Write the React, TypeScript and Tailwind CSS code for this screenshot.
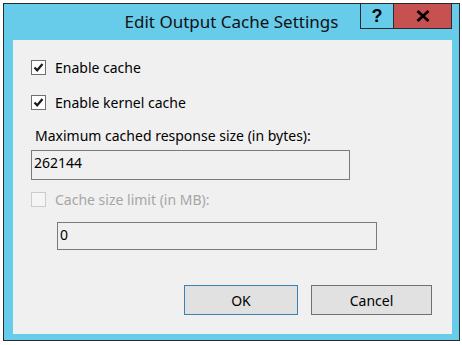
import React from 'react';

const font = { fontFamily: '"Noto Sans", "Liberation Sans", sans-serif' };

const CheckBox: React.FC<{ checked?: boolean; disabled?: boolean }> = ({ checked, disabled }) => (
  <div
    className={
      'w-[15px] h-[15px] border flex items-center justify-center shrink-0 ' +
      (disabled ? 'border-[#cccccc] bg-[#f5f5f5]' : 'border-[#6f6f6f] bg-white')
    }
  >
    {checked && (
      <svg width="11" height="11" viewBox="0 0 11 11">
        <path d="M1.5 5.5 L4.2 8.3 L9.5 2" fill="none" stroke="#1a1a1a" strokeWidth="2.2" />
      </svg>
    )}
  </div>
);

export default function App() {
  return (
    <div className="w-[462px] h-[345px] bg-white overflow-hidden" style={font}>
      <div className="ml-[3px] mt-[3px] w-[457px] h-[338px] border border-[#2b2b2b] bg-[#67cbea] flex flex-col">
        {/* title bar */}
        <div className="relative h-[36px] shrink-0 flex justify-center">
          <span className="mt-[7px] text-[17px] leading-[22px] text-[#111111]">Edit Output Cache Settings</span>
          <div className="absolute top-0 right-[7px] flex">
            <div className="w-[34px] h-[25px] border border-t-0 border-[#2b2b2b] flex items-center justify-center text-[18px] font-bold text-black leading-none" style={{ fontFamily: '"Liberation Sans", sans-serif' }}>
              ?
            </div>
            <div className="w-[58px] h-[25px] border border-l-0 border-t-0 border-[#2b2b2b] bg-[#c75050] flex items-center justify-center">
              <svg width="14" height="12" viewBox="0 0 14 12">
                <path d="M1.5 1 L12.5 11 M12.5 1 L1.5 11" stroke="#000" strokeWidth="2.8" />
              </svg>
            </div>
          </div>
        </div>

        {/* client area */}
        <div className="ml-[9px] mr-[7px] mb-[6px] flex-1 bg-[#f0f0f0] pl-[18px] pt-[20px] text-[14px] text-black">
          <div className="flex items-center gap-[9px] h-[15px]">
            <CheckBox checked />
            <span className="leading-none">Enable cache</span>
          </div>
          <div className="flex items-center gap-[9px] h-[15px] mt-[20px]">
            <CheckBox checked />
            <span className="leading-none">Enable kernel cache</span>
          </div>
          <div className="mt-[16px] ml-[4px] leading-[20px]">Maximum cached response size (in bytes):</div>
          <div className="mt-[4px] w-[319px] h-[30px] border border-[#7a7a7a] bg-[#f0f0f0] pl-[2px] pt-[3px] leading-[18px]">
            262144
          </div>
          <div className="flex items-center gap-[9px] h-[15px] mt-[12px]">
            <CheckBox disabled />
            <span className="leading-none text-[#a6a6a6]">Cache size limit (in MB):</span>
          </div>
          <div className="mt-[15px] ml-[26px] w-[320px] h-[28px] border border-[#7a7a7a] bg-[#f0f0f0] pl-[2px] pt-[3px] leading-[18px]">
            0
          </div>
          <div className="mt-[35px] ml-[153px] flex gap-[13px]">
            <button className="w-[114px] h-[30px] border border-[#3c7fb1] bg-[#e1e1e1] text-[14px] text-black">OK</button>
            <button className="w-[121px] h-[30px] border border-[#707070] bg-[#e1e1e1] text-[14px] text-black">Cancel</button>
          </div>
        </div>
      </div>
    </div>
  );
}
